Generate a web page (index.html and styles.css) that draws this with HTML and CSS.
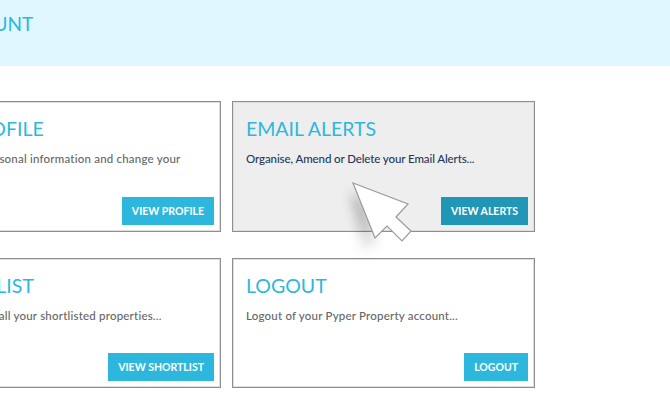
FILE: index.html
```html
<!DOCTYPE html>
<html lang="en">
<head>
    <meta charset="UTF-8">
    <meta name="viewport" content="width=device-width, initial-scale=1.0">
    <title>My Account - Pyper Property</title>
    <link rel="stylesheet" href="styles.css">
</head>
<body>
    <div class="banner">
        <h1>MY ACCOUNT</h1>
    </div>

    <div class="cards">
        <div class="card">
            <h2>MY PROFILE</h2>
            <p>Edit your personal information and change your password...</p>
            <a class="btn" href="#">VIEW PROFILE</a>
        </div>
        <div class="card active">
            <h2>EMAIL ALERTS</h2>
            <p>Organise, Amend or Delete your Email Alerts...</p>
            <a class="btn" href="#">VIEW ALERTS</a>
            <svg class="cursor" viewBox="0 0 90 90">
                <defs>
                    <filter id="soft" x="-50%" y="-50%" width="200%" height="200%">
                        <feGaussianBlur stdDeviation="6" />
                    </filter>
                    <linearGradient id="fade" x1="0" y1="0" x2="0" y2="1">
                        <stop offset="0" stop-color="#000" stop-opacity="0.35" />
                        <stop offset="1" stop-color="#000" stop-opacity="0.05" />
                    </linearGradient>
                </defs>
                <polygon class="cursor-shadow" points="16,16 28,78 42,66 30,30" fill="url(#fade)" filter="url(#soft)" />
                <polygon class="cursor-arrow" points="18,8 73,29 61,42 76,56 67,66 52,51 40,63" />
            </svg>
        </div>
        <div class="card">
            <h2>SHORTLIST</h2>
            <p>View or edit all your shortlisted properties...</p>
            <a class="btn" href="#">VIEW SHORTLIST</a>
        </div>
        <div class="card">
            <h2>LOGOUT</h2>
            <p>Logout of your Pyper Property account...</p>
            <a class="btn" href="#">LOGOUT</a>
        </div>
    </div>
</body>
</html>
```

FILE: styles.css
```css
html, body {
    overflow: hidden;
}

body {
    margin: 0;
    padding: 0;
    width: 670px;
    height: 400px;
    font-family: 'Lato', sans-serif;
    background-color: white;
    color: #666;
}

.banner {
    height: 66px;
    box-sizing: border-box;
    background-color: #e0f7ff;
    padding-top: 13px;
}

.banner h1 {
    margin: 0 0 0 -92px;
    font-size: 19px;
    line-height: 22px;
    font-weight: 400;
    color: #2db7dc;
}

.cards {
    display: grid;
    grid-template-columns: 303px 303px;
    grid-template-rows: 131px 130px;
    column-gap: 11px;
    row-gap: 26px;
    margin: 35px 0 0 -82px;
}

.card {
    position: relative;
    display: flex;
    flex-direction: column;
    box-sizing: border-box;
    border: 1px solid #8e8e8e;
    box-shadow: inset 0 0 0 1px #dedede;
    padding: 15px 6px 6px 13px;
}

.card.active {
    background-color: #eeeeee;
}

.card h2 {
    margin: 0;
    font-size: 19.5px;
    line-height: 24px;
    font-weight: 400;
    color: #2db7dc;
}

.card p {
    margin: 10px 0 0;
    width: 262px;
    font-size: 11.5px;
    line-height: 16px;
    font-weight: 500;
    letter-spacing: 0.2px;
}

.card.active p {
    color: #24395a;
    letter-spacing: -0.1px;
}

.btn {
    margin-top: auto;
    align-self: flex-end;
    padding: 0 10px;
    height: 28px;
    line-height: 28px;
    background-color: #2db7dc;
    color: white;
    font-size: 10.5px;
    font-weight: 700;
    text-decoration: none;
    white-space: nowrap;
}

.card.active .btn {
    background-color: #2197b8;
}

.cursor {
    position: absolute;
    left: 102px;
    top: 73px;
    width: 90px;
    height: 90px;
    overflow: visible;
}

.cursor-arrow {
    fill: white;
    stroke: #9a9a9a;
    stroke-width: 1.2;
}
```
